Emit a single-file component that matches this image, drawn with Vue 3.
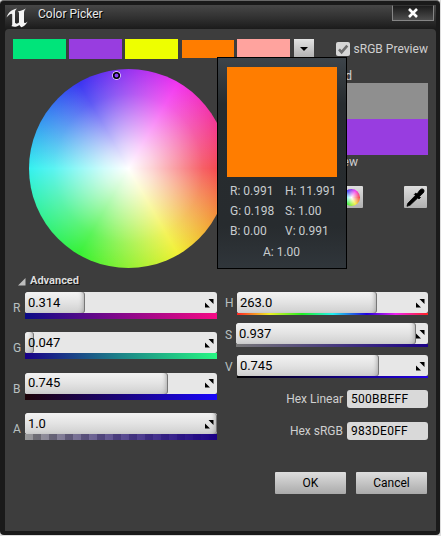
<script setup>
const swatches = ['#00e47a', '#983de0', '#eeff00', '#ff7d00', '#ffa39e']
const left = [
  { label: 'R', value: '0.314', fill: 60, cls: 'bar-r' },
  { label: 'G', value: '0.047', fill: 9, cls: 'bar-g' },
  { label: 'B', value: '0.745', fill: 143, cls: 'bar-b' },
  { label: 'A', value: '1.0', fill: 192, cls: 'bar-a' },
]
const right = [
  { label: 'H', value: '263.0', fill: 140, cls: 'bar-h' },
  { label: 'S', value: '0.937', fill: 180, cls: 'bar-s' },
  { label: 'V', value: '0.745', fill: 142, cls: 'bar-v' },
]
const tip = ['R: 0.991', 'H: 11.991', 'G: 0.198', 'S: 1.00', 'B: 0.00', 'V: 0.991']
</script>

<template>
  <div class="window">
    <header class="title">
      <svg class="logo" width="23" height="20" viewBox="0 0 23 20">
        <path d="M.5 9.5C2 4.500 5.500 1.500 11 .5 9.500 1.700 9 2.700 9 4.500V14.800C9.800 16 11.700 16 13 14.200V5.500C13 4.200 12.500 3.600 11.600 3.200 15 3 17.500 1.700 19.800.4 18.400 2 18 3.300 18 5V14c0 1.300 1.200 1.600 3.600-.6C20.200 16.500 18 18.400 15.200 19.300L13.300 16.900C11.500 18.500 8.500 19.400 5.200 18 6 17.600 6.200 17.200 6.200 16.200V6.600C6.200 5.400 5 5.400 3.900 6.200 2.800 7 1.500 8.200.5 9.500Z" />
      </svg>
      <span class="caption">Color Picker</span>
      <div class="close">
        <svg width="12" height="12" viewBox="0 0 12 12"><path d="M2 2 10 10M10 2 2 10" /></svg>
      </div>
    </header>

    <main class="body">
      <div class="top">
        <div class="theme">
          <i v-for="(c, i) in swatches" :key="c" class="swatch" :class="{ hover: i === 3 }" :style="{ background: c }"></i>
        </div>
        <div class="drop"><svg width="8" height="4" viewBox="0 0 8 4"><path d="M0 0H8L4 4Z" /></svg></div>
        <div class="check">
          <svg width="14" height="14" viewBox="0 0 14 14"><path d="M3 7.300 5.600 10.200 11.300 3.600" /></svg>
        </div>
        <span class="srgb">sRGB Preview</span>
      </div>

      <div class="picker">
        <div class="wheel">
          <svg class="marker" width="9" height="9" viewBox="0 0 9 9">
            <circle class="halo" cx="4.500" cy="4.500" r="3.900" />
            <circle class="ring" cx="4.500" cy="4.500" r="2.800" />
          </svg>
        </div>
        <div class="side">
          <span class="cmp">Old</span>
          <div class="old"></div>
          <div class="new"></div>
          <span class="cmp below">New</span>
          <div class="tools">
            <div class="tool"><i class="mini"></i></div>
            <div class="tool">
              <svg width="19" height="19" viewBox="0 0 19 19">
                <path class="dropper" d="M1 18.300 1.700 15.400 9.300 7.500 8.300 6.500 9.800 5 11 6.100 13.700 2.200C15.200.2 18.500.5 18 3.400 17.800 4.600 17 5.300 16 6.100L13.500 8.400 14.500 9.500 13 11 11.800 9.900 4.200 17.100Z" />
              </svg>
            </div>
          </div>
        </div>
      </div>

      <div class="advanced">
        <svg width="8" height="8" viewBox="0 0 8 8"><path d="M7.500 0V7.500H0Z" /></svg>
        <b>Advanced</b>
      </div>

      <div class="columns">
        <div class="col rgba">
          <div v-for="s in left" :key="s.label" class="row">
            <span class="label">{{ s.label }}</span>
            <div class="control">
              <div class="spin">
                <div class="fill" :style="{ width: s.fill + 'px' }"></div>
                <span class="value">{{ s.value }}</span>
                <svg class="grip" width="9" height="9" viewBox="0 0 9 9"><path d="M3.500 0H8.500V5ZM0 3.500 5 8.500H0Z" /></svg>
              </div>
              <div class="bar" :class="s.cls"></div>
            </div>
          </div>
        </div>
        <div class="col hsv">
          <div v-for="s in right" :key="s.label" class="row" :class="'row-' + s.label">
            <span class="label">{{ s.label }}</span>
            <div class="control">
              <div class="spin">
                <div class="fill" :style="{ width: s.fill + 'px' }"></div>
                <span class="value">{{ s.value }}</span>
                <svg class="grip" width="9" height="9" viewBox="0 0 9 9"><path d="M3.500 0H8.500V5ZM0 3.500 5 8.500H0Z" /></svg>
              </div>
              <div class="bar" :class="s.cls"></div>
            </div>
          </div>
          <div class="hex"><span>Hex Linear</span><div class="field">500BBEFF</div></div>
          <div class="hex"><span>Hex sRGB</span><div class="field">983DE0FF</div></div>
        </div>
      </div>

      <footer class="actions">
        <div class="btn">OK</div>
        <div class="btn">Cancel</div>
      </footer>
    </main>

    <div class="tooltip">
      <div class="big"></div>
      <div class="grid"><span v-for="t in tip" :key="t">{{ t }}</span></div>
      <div class="alpha">A: 1.00</div>
    </div>
  </div>
</template>

<style>
body { background: #ddd; overflow: hidden; }
</style>

<style scoped>
* { box-sizing: border-box; }
svg, i { display: block; flex: none; }
.window {
  position: relative; width: 440px; height: 535px; padding: 4px 4px 4px 5px;
  background: #1a1a1a; border-top: 1px solid #686868; border-radius: 4px;
  font: 12px/14px Roboto, sans-serif; color: #cfcfcf;
}
.title {
  display: flex; height: 24px;
  background: linear-gradient(#474747, #303030 55%, #1b1b1b);
}
.logo { margin: 3px 0 0 1px; fill: #f4f4f4; }
.caption { margin: 2px 0 0 9px; color: #e8e8e8; text-shadow: 1px 1px 0 #000; }
.close {
  display: flex; align-items: center; justify-content: center; margin-left: auto; margin-right: 2px;
  width: 42px; height: 16px; border: 1px solid #858585; border-top-color: #333;
  background: linear-gradient(#1c1c1c, #4d4d4d);
}
.close path { stroke: #fff; stroke-width: 2.600; }
.body { height: 502px; padding: 10px 8px 0; background: #3d3d3d; border-radius: 4px 4px 0 0; }
.top { display: flex; height: 21px; }
.theme { display: flex; gap: 3px; width: 281px; }
.swatch { width: 53px; height: 20px; }
.hover { width: 52px; height: 18px; margin: 1px 0 0 1px; }
.drop {
  display: flex; align-items: center; justify-content: center; width: 20px; height: 20px;
  background: linear-gradient(#e3e3e3, #adadad);
}
.check { width: 14px; height: 14px; margin: 3px 0 0 22px; background: #d6d6d6; border-radius: 2px; }
.check path { fill: none; stroke: #6e6e6e; stroke-width: 2.600; }
.srgb { margin: 3px 0 0 4px; white-space: nowrap; letter-spacing: .03px; }
.picker { display: flex; justify-content: space-between; height: 214px; }
.wheel {
  position: relative; width: 199px; height: 199px; margin: 9px 0 0 16px; border-radius: 50%;
  background:
    radial-gradient(closest-side, #fff 0%, rgba(255,255,255,.76) 25%, rgba(255,255,255,.48) 50%, rgba(255,255,255,.19) 75%, rgba(255,255,255,0) 100%),
    conic-gradient(from 90deg, #f43b42, #f1f034 60deg, #35f134 120deg, #35f1ef 180deg, #3934f1 240deg, #f234ef 300deg, #f43b42 360deg);
}
.marker { position: absolute; left: 83px; top: 2px; overflow: visible; }
.halo { fill: none; stroke: #fff; stroke-width: 1; }
.ring { fill: none; stroke: #000; stroke-width: 1.600; }
.side { width: 94px; padding-top: 9px; }
.cmp { display: block; width: max-content; height: 14px; }
.old { height: 36px; background: #8f8f8f; }
.new { height: 36px; background: #983de0; }
.below { height: 31px; }
.tools { display: flex; justify-content: space-between; padding: 0 1px 0 6px; }
.tool {
  display: flex; align-items: center; justify-content: center; width: 23px; height: 22px;
  background: linear-gradient(#dedede, #b0b0b0); border-radius: 1px;
}
.dropper { stroke: #000; stroke-width: .8; stroke-linejoin: round; }
.mini {
  width: 17px; height: 17px; border-radius: 50%;
  background: radial-gradient(closest-side, #fff, transparent),
    conic-gradient(from 90deg, #f43b42, #f1f034, #35f134, #35f1ef, #3934f1, #f234ef, #f43b42);
}
.advanced { display: flex; height: 18px; padding-left: 5px; font-size: 11px; color: #dcdcdc; }
.advanced svg { margin: 4px 4px 0 0; fill: #bdbdbd; }
.advanced b { text-shadow: 1px 1px 0 #111; }
.columns { display: flex; height: 180px; }
.col { display: flex; flex-direction: column; }
.rgba { width: 204px; gap: 13.400px; }
.hsv { width: 211px; }
.row { display: flex; }
.label { width: 12px; padding-top: 9px; color: #b8c0c0; }
.control { flex: 1; }
.spin { display: flex; position: relative; height: 21px; background: #e7e7e7; border-radius: 3px 3px 2px 2px; color: #000; align-items: center; overflow: hidden; }
.fill {
  position: absolute; left: 0; top: 0; height: 21px; border-radius: 3px;
  background: linear-gradient(#f3f3f3, #e3e3e3 50%, #cfcfcf); box-shadow: inset -1px 0 0 #777, inset -5px -1px 4px -3px #aaa;
}
.value { position: relative; margin-left: 3px; font-size: 13px; letter-spacing: -.1px; }
.grip { position: relative; margin: 1px 3px 0 auto; fill: #000; }
.bar { height: 6px; }
.bar-r { background: linear-gradient(90deg, #0b0b86, #85088a 50%, #f50a85); }
.bar-g { background: linear-gradient(90deg, #190087, #1c8488 50%, #27f783); }
.bar-b { background: linear-gradient(90deg, #1d0308, #1a047b 50%, #1806fa); }
.bar-a {
  background: linear-gradient(90deg, transparent, #1b0087),
    repeating-linear-gradient(90deg, #9a9a9a 0 8px, #737373 8px 16px);
}
.hsv .row { height: 23px; padding-left: 8px; margin-bottom: 8px; }
.hsv .row-S { height: 24px; }
.hsv .label { width: 12px; padding-top: 4px; }
.hsv .row-S .label { width: 11px; padding-top: 5px; }
.hsv .row-V .label { padding-top: 5px; }
.hsv .bar { height: 2px; }
.hsv .bar-s { height: 3px; background: linear-gradient(90deg, #777, #1b0087); }
.bar-h { background: linear-gradient(90deg, #f22, #ee2 17%, #2e2 34%, #2ee 50%, #20d 68%, #e2e 83%, #f22); }
.bar-v { background: linear-gradient(90deg, #000, #2200e5); }
.hsv .row-V { margin-bottom: 12px; }
.hex { display: flex; justify-content: flex-end; align-items: center; gap: 4px; height: 18px; margin-bottom: 14px; }
.field { width: 81px; height: 18px; padding: 2px 4px; background: #d9d9d9; border-radius: 3px; color: #000; letter-spacing: .25px; }
.actions { display: flex; justify-content: flex-end; gap: 10px; padding-right: 1px; }
.btn { width: 71px; height: 22px; line-height: 22px; text-align: center; color: #000; background: linear-gradient(#dedede, #aaa); border-radius: 1px; }
.tooltip {
  position: absolute; left: 217px; top: 56px; width: 130px; height: 212px; padding: 9px;
  border: 1px solid #000; background: linear-gradient(#3d444a, #272c2f 22%, #272b2e 80%, #30363b); color: #c8ccce;
}
.big { height: 110px; background: #ff7d00; }
.grid { display: grid; grid-template-columns: 55px 1fr; grid-auto-rows: 20px; padding: 7px 0 0 3px; white-space: nowrap; }
.alpha { margin-top: 1px; padding-left: 36px; }
</style>
